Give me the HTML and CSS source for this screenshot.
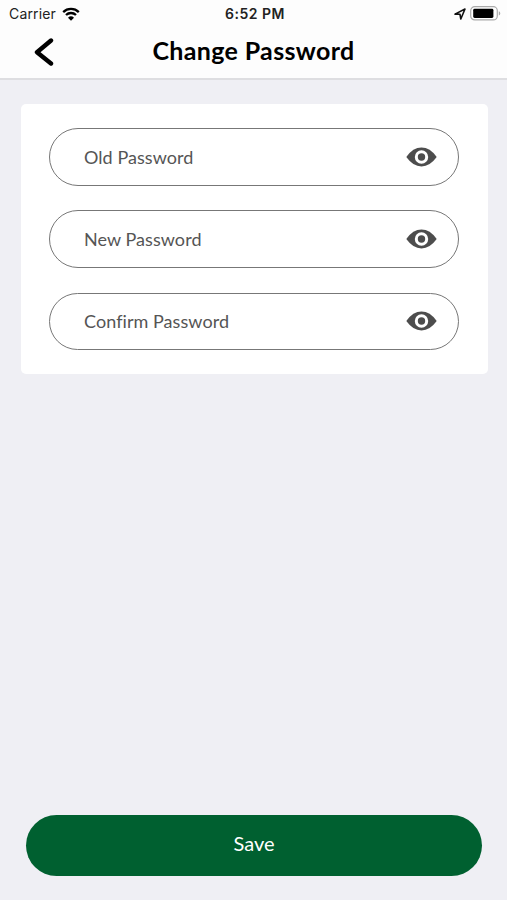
FILE: index.html
```
<!DOCTYPE html>
<html lang="en">

<head>
    <meta charset="UTF-8">
    <meta name="viewport" content="width=device-width, initial-scale=1">
    <title>Change Password</title>
    <link rel="stylesheet" href="styles.css">
</head>

<body>
    <header>
        <div class="status">
            <div class="status-left">
                <span class="carrier">Carrier</span>
                <svg class="wifi" width="18" height="14" viewBox="0 0 18 14">
                    <path d="M1.2 5.1a11.2 11.2 0 0 1 15.6 0M4 8a7.2 7.2 0 0 1 10 0" fill="none" stroke="#000" stroke-width="2.3"/>
                    <path d="M9 13.7L6 10.7a4.3 4.3 0 0 1 6 0z"/>
                </svg>
            </div>
            <span class="time">6:52 PM</span>
            <div class="status-right">
                <svg width="12" height="12" viewBox="0 0 12 12">
                    <path d="M1 6.1L11 1 6.8 11 6 6.3z" fill="none" stroke="#111" stroke-width="1.6" stroke-linejoin="round"/>
                </svg>
                <svg class="battery" width="31" height="15" viewBox="0 0 31 15">
                    <rect x=".7" y=".7" width="26.6" height="13.2" rx="4" fill="#fff" stroke="#aaa" stroke-width="1.2"/>
                    <rect x="3.2" y="2.8" width="20.2" height="9.2" rx="1.4"/>
                    <path d="M28.8 5.2v4.4q1.5-.6 1.5-2.2t-1.5-2.2z" fill="#aaa"/>
                </svg>
            </div>
        </div>
        <div class="navbar">
            <a href="#" class="back">
                <svg width="20" height="28" viewBox="0 0 20 28">
                    <path d="M17 2.5L3 14.2 17 25.5" fill="none" stroke="#000" stroke-width="4.4" stroke-linecap="round" stroke-linejoin="round"/>
                </svg>
            </a>
            <h1>Change Password</h1>
        </div>
    </header>

    <form>
        <div class="card">
            <div class="field">
                <input type="password" class="old" placeholder="Old Password">
                <svg class="eye" width="31" height="20" viewBox="0 0 31 20">
                    <path d="M.3 10Q7 .6 15.5.6T30.7 10Q24 19.4 15.5 19.4T.3 10z" fill="#4d4d4d"/>
                    <circle cx="15.5" cy="10" r="5.2" fill="#4d4d4d" stroke="#fff" stroke-width="3"/>
                </svg>
            </div>
            <div class="field">
                <input type="password" class="new" placeholder="New Password">
                <svg class="eye" width="31" height="20" viewBox="0 0 31 20">
                    <path d="M.3 10Q7 .6 15.5.6T30.7 10Q24 19.4 15.5 19.4T.3 10z" fill="#4d4d4d"/>
                    <circle cx="15.5" cy="10" r="5.2" fill="#4d4d4d" stroke="#fff" stroke-width="3"/>
                </svg>
            </div>
            <div class="field">
                <input type="password" class="confirm" placeholder="Confirm Password">
                <svg class="eye" width="31" height="20" viewBox="0 0 31 20">
                    <path d="M.3 10Q7 .6 15.5.6T30.7 10Q24 19.4 15.5 19.4T.3 10z" fill="#4d4d4d"/>
                    <circle cx="15.5" cy="10" r="5.2" fill="#4d4d4d" stroke="#fff" stroke-width="3"/>
                </svg>
            </div>
        </div>
        <button type="button" class="save">Save</button>
    </form>
</body>

</html>
```
FILE: styles.css
```
* {
    box-sizing: border-box;
}

body {
    display: flex;
    flex-direction: column;
    height: 900px;
    margin: 0;
    background-color: #efeff4;
    font-family: Lato, "Liberation Sans", sans-serif;
}

header {
    height: 80px;
    background-color: #fdfdfd;
    border-bottom: 2px solid #dedee1;
}

/* status bar */
.status {
    display: grid;
    grid-template-columns: 1fr auto 1fr;
    align-items: center;
    height: 27px;
    padding: 0 6px 0 9px;
    font-family: Inter, "Liberation Sans", sans-serif;
    font-size: 14px;
    color: #222;
}

.status-left, .status-right {
    display: flex;
    align-items: center;
}

.status-right {
    justify-content: flex-end;
    gap: 4px;
}

.carrier {
    letter-spacing: .15px;
}

.wifi {
    margin-left: 6px;
}

.time {
    font-weight: 600;
    letter-spacing: .5px;
}

/* title row */
.navbar {
    display: grid;
    grid-template-columns: 60px 1fr 60px;
    align-items: center;
    height: 49px;
}

.back {
    display: flex;
    padding-left: 34px;
}

h1 {
    margin: 0;
    padding-bottom: 3px;
    font-size: 25px;
    font-weight: 700;
    letter-spacing: .35px;
    text-align: center;
    color: #000;
}

form {
    display: flex;
    flex: 1;
    flex-direction: column;
    justify-content: space-between;
    padding: 24px 19.5px 24.5px 20.5px;
}

.card {
    display: flex;
    flex-direction: column;
    gap: 24.7px;
    padding: 24px 28.5px;
    background-color: #fff;
    border-radius: 5px;
}

.field {
    display: flex;
    align-items: center;
    height: 57.6px;
    padding: 0 21px 0 34px;
    border: 1.4px solid #777;
    border-radius: 29px;
}

.field input {
    flex: 1;
    min-width: 0;
    padding: 0;
    border: none;
    outline: none;
    background: none;
    font-family: inherit;
    font-size: 18px;
    letter-spacing: .06px;
}

.field input::placeholder {
    color: #555;
    opacity: 1;
}

.save {
    height: 60.5px;
    margin: 0 5.5px;
    padding: 0 0 4px;
    border: none;
    border-radius: 31px;
    background-color: #006030;
    color: #fff;
    font-family: inherit;
    font-size: 20px;
}
```
